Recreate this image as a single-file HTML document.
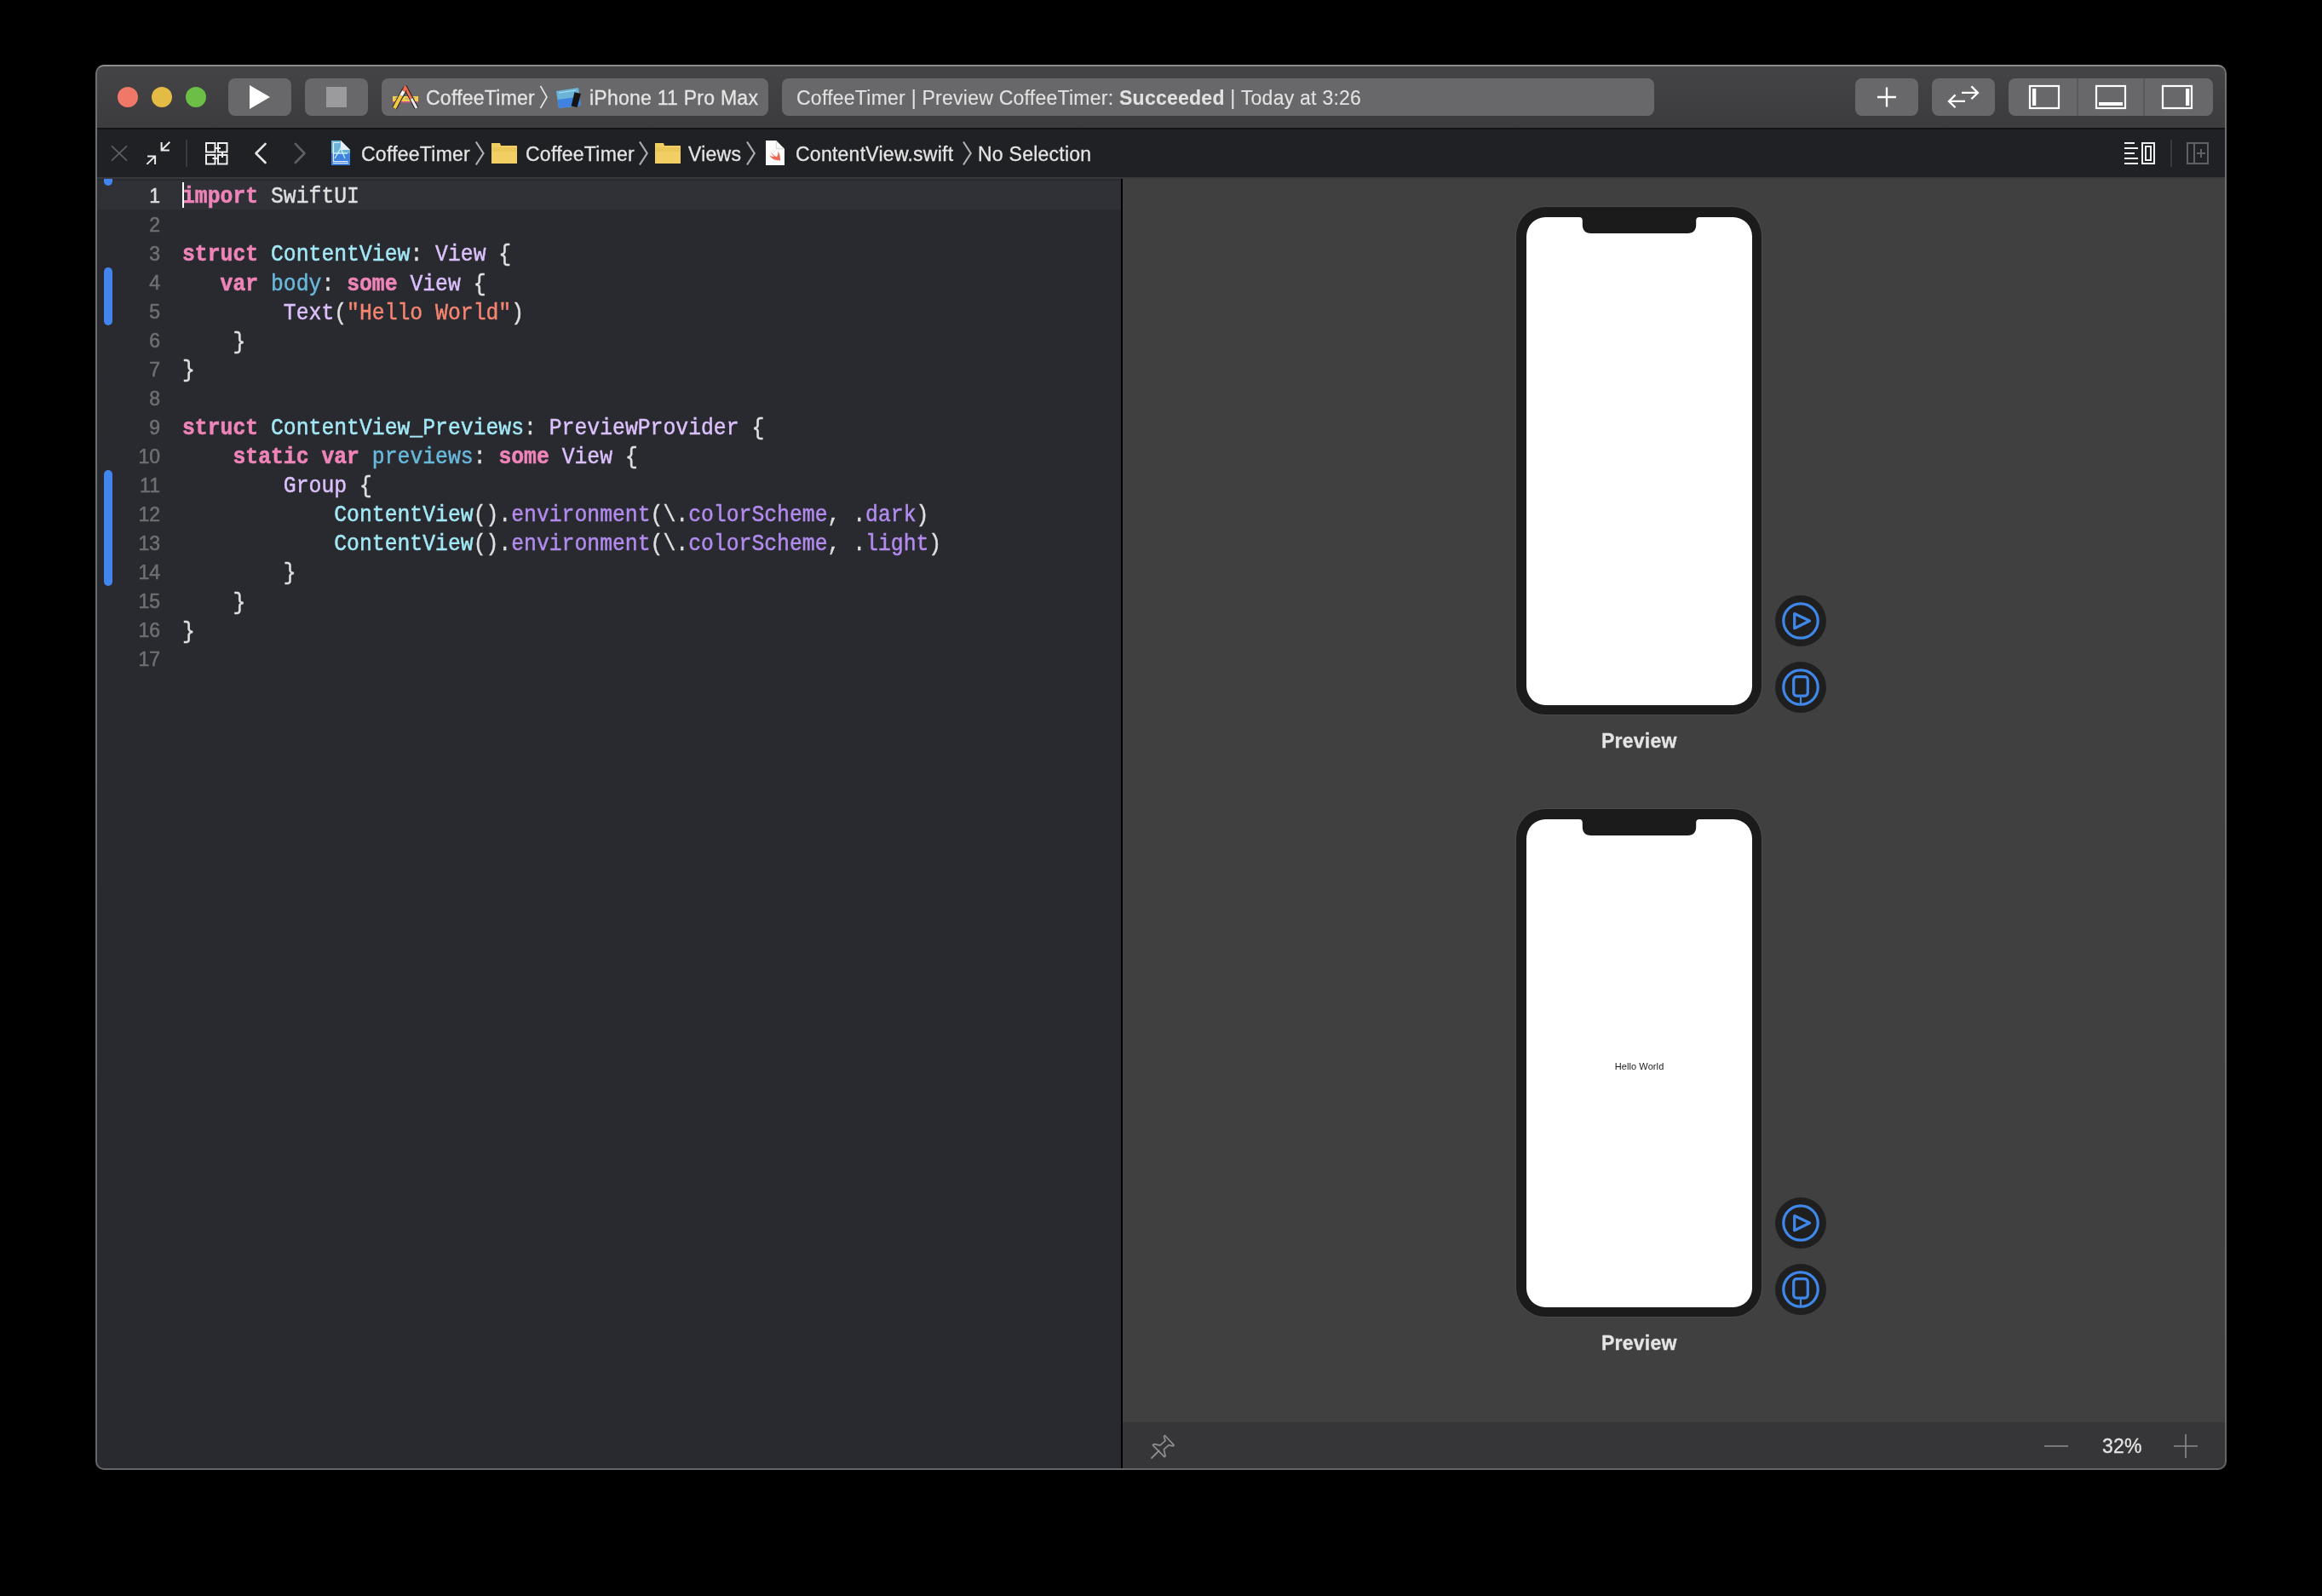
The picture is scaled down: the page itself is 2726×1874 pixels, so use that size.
<!DOCTYPE html>
<html><head><meta charset="utf-8">
<style>
*{margin:0;padding:0;box-sizing:border-box}
html,body{width:2726px;height:1874px;background:#000;overflow:hidden}
body{position:relative;font-family:"Liberation Sans",sans-serif}
.a{position:absolute}
#win{left:112px;top:76px;width:2502px;height:1650px;border-radius:10px;background:linear-gradient(#8e8e90 0px,#8e8e90 2px,#707073 4px,#646569 100%);overflow:hidden}
#tb{left:2px;top:2px;width:2498px;height:72px;background:linear-gradient(#444446,#3c3c3e);border-radius:8px 8px 0 0}
#tbline{left:2px;top:74px;width:2498px;height:2px;background:#141415}
#jb{left:2px;top:76px;width:2498px;height:56px;background:#202124}
#jbline{left:2px;top:132px;width:2498px;height:2px;background:#38393b}
#ed{left:2px;top:134px;width:1202px;height:1514px;background:#292a2f;border-radius:0 0 0 8px}
#div{left:1204px;top:134px;width:2px;height:1514px;background:#000}
#pv{left:1206px;top:134px;width:1294px;height:1460px;background:#404040}
#bb{left:1206px;top:1594px;width:1294px;height:54px;background:#363638;border-radius:0 0 8px 0}
.btn{background:#68686a;border-radius:8px}
.tl{width:24px;height:24px;border-radius:50%}
.ui{will-change:transform;-webkit-text-stroke:0.3px currentColor;color:#e4e4e4;font-size:23px;letter-spacing:0.25px;white-space:nowrap;line-height:26px}
.code{font-family:"Liberation Mono",monospace;font-size:24.75px;line-height:30.909px;white-space:pre;color:#dfdfe0;will-change:transform;transform:scaleY(1.1);transform-origin:0 0;-webkit-text-stroke:0.45px currentColor}
.ln{font-family:"Liberation Sans",sans-serif;font-size:23px;line-height:34px;letter-spacing:0px;color:#6e6f73;text-align:right;width:100px;will-change:transform;-webkit-text-stroke:0.55px currentColor}
.k{color:#ee84b8;font-weight:bold;-webkit-text-stroke:0.55px currentColor}
.td{color:#a3e8f6}
.od{color:#69b9dc}
.st{color:#dbc0fc}
.sf{color:#b28bee}
.s{color:#f58471}
</style></head><body>
<div id="win" class="a">
  <div id="tb" class="a"></div>
  <div id="tbline" class="a"></div>
  <div id="jb" class="a"></div>
  <div id="jbline" class="a"></div>
  <div id="ed" class="a"></div>
  <div id="div" class="a"></div>
  <div id="pv" class="a"></div>
  <div id="bb" class="a"></div>
</div>

<!-- traffic lights -->
<div class="a tl" style="left:138px;top:102px;background:#ef7868"></div>
<div class="a tl" style="left:178px;top:102px;background:#e3bb45"></div>
<div class="a tl" style="left:218px;top:102px;background:#6bbf46"></div>

<!-- toolbar buttons -->
<div class="a btn" style="left:268px;top:92px;width:74px;height:44px"></div>
<div class="a btn" style="left:358px;top:92px;width:74px;height:44px"></div>
<div class="a btn" style="left:448px;top:92px;width:454px;height:44px"></div>
<div class="a btn" style="left:918px;top:92px;width:1024px;height:44px"></div>
<div class="a btn" style="left:2178px;top:92px;width:74px;height:44px"></div>
<div class="a btn" style="left:2268px;top:92px;width:74px;height:44px"></div>
<div class="a btn" style="left:2358px;top:92px;width:240px;height:44px"></div>

<div class="a ui" style="left:500px;top:102px">CoffeeTimer</div>
<div class="a ui" style="left:692px;top:102px">iPhone 11 Pro Max</div>
<div class="a ui" style="left:935px;top:102px;-webkit-text-stroke:0.1px currentColor;color:#e2e2e2">CoffeeTimer | Preview CoffeeTimer: <b>Succeeded</b> | Today at 3:26</div>

<!-- jump bar text -->
<div class="a ui" style="left:424px;top:168px">CoffeeTimer</div>
<div class="a ui" style="left:617px;top:168px">CoffeeTimer</div>
<div class="a ui" style="left:808px;top:168px">Views</div>
<div class="a ui" style="left:934px;top:168px">ContentView.swift</div>
<div class="a ui" style="left:1148px;top:168px">No Selection</div>

<!-- editor -->
<div class="a" style="left:114px;top:212px;width:1202px;height:34px;background:#2f3137"></div>
<div class="a ln" style="left:88px;top:213px">
<div style="color:#dedede">1</div><div>2</div><div>3</div><div>4</div><div>5</div><div>6</div><div>7</div><div>8</div><div>9</div><div>10</div><div>11</div><div>12</div><div>13</div><div>14</div><div>15</div><div>16</div><div>17</div>
</div>
<div class="a code" style="left:214px;top:214px"><span class="k">import</span> SwiftUI

<span class="k">struct</span> <span class="td">ContentView</span>: <span class="st">View</span> {
   <span class="k">var</span> <span class="od">body</span>: <span class="k">some</span> <span class="st">View</span> {
        <span class="st">Text</span>(<span class="s">"Hello World"</span>)
    }
}

<span class="k">struct</span> <span class="td">ContentView_Previews</span>: <span class="st">PreviewProvider</span> {
    <span class="k">static</span> <span class="k">var</span> <span class="od">previews</span>: <span class="k">some</span> <span class="st">View</span> {
        <span class="st">Group</span> {
            <span class="td">ContentView</span>().<span class="sf">environment</span>(\.<span class="sf">colorScheme</span>, .<span class="sf">dark</span>)
            <span class="td">ContentView</span>().<span class="sf">environment</span>(\.<span class="sf">colorScheme</span>, .<span class="sf">light</span>)
        }
    }
}
</div>
<div class="a" style="left:214px;top:214px;width:2px;height:30px;background:#fff"></div>


<svg class="a" style="left:0;top:0" width="2726" height="1874" viewBox="0 0 2726 1874">
<!-- play / stop -->
<path d="M293 100 L317 114 L293 128 Z" fill="#fff"/>
<rect x="383" y="102" width="24" height="24" fill="#9b9b9d"/>
<!-- app icon -->
<g>
 <rect x="461" y="113" width="30" height="7" fill="#f2cd48"/>
 <rect x="461" y="119" width="30" height="1.5" fill="#d9568f"/>
 <path d="M464 115 h3 M470 115 h2 M476 116 h3 M484 115 h3" stroke="#8a8a9a" stroke-width="1.2"/>
 <path d="M475 101 L489 127" stroke="#222" stroke-width="5"/>
 <path d="M475 101 L483 116" stroke="#ee6b50" stroke-width="3"/>
 <path d="M483 116 L489 127" stroke="#e8e8e8" stroke-width="3"/>
 <path d="M463 127 L475 105" stroke="#222" stroke-width="6"/>
 <path d="M463 127 L471 112" stroke="#f2c93e" stroke-width="4"/>
 <path d="M471 112 L474 107" stroke="#f4f4f4" stroke-width="4"/>
 <path d="M474 107 L476 103.5" stroke="#ee6b50" stroke-width="4"/>
</g>
<!-- device icon -->
<path d="M653 107 L679 103 L682 124 L656 127 Z" fill="#6cb3d8"/>
<path d="M654.5 117 L680.5 113.5 L682 124 L656 127 Z" fill="#3f82e0"/>
<path d="M656 109 L676 106" stroke="#a8e6f5" stroke-width="1.2"/>
<path d="M674.5 108.3 L682 110 L677.6 126 L670.6 124.6 Z" fill="#151515"/>
<!-- scheme chevron -->
<path d="M634.5 101 L642 114 L634.5 127" stroke="#e6e6e6" stroke-width="1.6" fill="none"/>
<!-- toolbar right icons -->
<path d="M2204 114 H2226 M2215 102.5 V125.5" stroke="#fff" stroke-width="2.3"/>
<path d="M2303 108.9 H2322 M2314.4 101.4 L2322 108.9 L2314.4 116.3" stroke="#fff" stroke-width="2.3" fill="none"/>
<path d="M2307 118.9 H2288 M2295.6 111.4 L2288 118.9 L2295.6 126.3" stroke="#fff" stroke-width="2.3" fill="none"/>
<rect x="2438.5" y="92" width="1.2" height="44" fill="#505052"/>
<rect x="2516.5" y="92" width="1.2" height="44" fill="#505052"/>
<rect x="2383" y="101" width="34" height="26" stroke="#fff" stroke-width="2.2" fill="none"/>
<rect x="2386" y="104" width="4.3" height="20" fill="#fff"/>
<rect x="2461" y="101" width="34" height="26" stroke="#fff" stroke-width="2.2" fill="none"/>
<rect x="2464" y="120" width="28" height="4" fill="#fff"/>
<rect x="2539" y="101" width="34" height="26" stroke="#fff" stroke-width="2.2" fill="none"/>
<rect x="2566" y="104" width="4.3" height="20" fill="#fff"/>
<!-- jump bar left icons -->
<path d="M131 171.3 L149 188.7 M149 171.3 L131 188.7" stroke="#606166" stroke-width="1.6"/>
<path d="M199.3 166.8 L190 176 M189.6 167.1 V176.5 H198.9" stroke="#ececec" stroke-width="2" fill="none"/>
<path d="M172.4 192.9 L182 183.6 M173.1 183.6 H182.1 V192.9" stroke="#ececec" stroke-width="2" fill="none"/>
<rect x="218" y="164" width="2" height="32" fill="#3a3b3e"/>
<g stroke="#efefef" stroke-width="2" fill="none">
 <rect x="242" y="168" width="10.5" height="10.5"/>
 <rect x="256" y="168" width="10.5" height="10.5"/>
 <rect x="242" y="182" width="10.5" height="10.5"/>
 <rect x="256" y="182" width="10.5" height="10.5"/>
 <path d="M252.5 174 H259 M261 178.5 V185 M249.5 186 H256"/>
</g>
<path d="M311.6 168.9 L300.5 180 L311.6 191" stroke="#e6e6e6" stroke-width="2.6" stroke-linecap="round" stroke-linejoin="round" fill="none"/>
<path d="M346.8 168.9 L357.5 180 L346.8 191" stroke="#5e5f63" stroke-width="2.6" stroke-linecap="round" stroke-linejoin="round" fill="none"/>
<!-- project file icon -->
<path d="M389 165 H400 L411 176 V194 H389 Z" fill="#3f82e0"/>
<path d="M389 165 H400 L411 176 V180 H389 Z" fill="#6cb3d8"/>
<path d="M391.5 167.5 H399 M391.5 167.5 V189.5 H408.5" stroke="#e8f0f4" stroke-width="1.2" fill="none"/>
<path d="M391 191.5 H409" stroke="#e8f0f4" stroke-width="1.2"/>
<path d="M400 165 L411 176 H400 Z" fill="#e8eef2"/>
<path d="M393 186 L400 174 L405 186 M392 180 H408" stroke="#c9f0fb" stroke-width="1.3" fill="none"/>
<!-- jump chevrons -->
<path d="M558.8 166.5 L567.5 180 L558.8 193.5" stroke="#acadb1" stroke-width="2.2" fill="none"/>
<path d="M751 166.5 L759.7 180 L751 193.5" stroke="#acadb1" stroke-width="2.2" fill="none"/>
<path d="M877 166.5 L885.7 180 L877 193.5" stroke="#acadb1" stroke-width="2.2" fill="none"/>
<path d="M1131 166.5 L1139.7 180 L1131 193.5" stroke="#acadb1" stroke-width="2.2" fill="none"/>
<!-- folders -->
<path d="M577 168 H587 L588 171 H607 V192 H577 Z" fill="#f2cf63"/>
<path d="M769 168 H779 L780 171 H799 V192 H769 Z" fill="#f2cf63"/>
<rect x="578" y="173" width="28" height="5" fill="#e6c252" opacity="0.6"/>
<rect x="770" y="173" width="28" height="5" fill="#e6c252" opacity="0.6"/>
<!-- swift file -->
<path d="M899 165 H911.3 L921 174.8 V194 H899 Z" fill="#fdfdfd"/>
<path d="M911.3 165 V174.8 H921" stroke="#c8c8c8" stroke-width="0.8" fill="none"/>
<path d="M903 182 C906 187 911 189 914 188 L916 189 C916 185 916 181 913 177 C914 181 913 184 911 184 C908 182 906 180 904 178 C906 181 908 183 909 184 C907 184 904 183 903 182 Z" fill="#ec6a55"/>
<!-- jump right icons -->
<path d="M2494 168 H2506 M2494 174 H2510 M2494 180 H2506 M2494 186 H2510 M2494 192 H2510" stroke="#efefef" stroke-width="2"/>
<rect x="2515" y="168" width="14" height="24" stroke="#efefef" stroke-width="2" fill="none"/>
<rect x="2519" y="172" width="6" height="16" stroke="#efefef" stroke-width="2" fill="none"/>
<rect x="2548" y="164" width="2" height="32" fill="#3a3b3e"/>
<rect x="2568" y="168" width="24" height="24" stroke="#606166" stroke-width="2" fill="none"/>
<path d="M2576 168 V192 M2579 180 H2589 M2584 175 V185" stroke="#606166" stroke-width="2"/>
<!-- change bars -->
<path d="M122 210 H132 V213 A5 5 0 0 1 122 213 Z" fill="#4285ee"/>
<rect x="122" y="314" width="10" height="68" rx="5" fill="#4285ee"/>
<rect x="122" y="552" width="10" height="136" rx="5" fill="#4285ee"/>
</svg>

<!-- preview -->
<div class="a" style="left:1779px;top:242px;width:290px;height:598px;border-radius:35px;background:#4a4b4d"></div>
<div class="a" style="left:1780px;top:243px;width:288px;height:596px;border-radius:34px;background:#1b1b1b"></div>
<div class="a" style="left:1792px;top:255px;width:265px;height:573px;border-radius:22.5px;background:#fff;overflow:hidden">
  <svg class="a" style="left:0;top:0" width="265" height="40" viewBox="0 0 265 40"><path d="M62 0 C64.5 0 65.8 1.5 65.8 4 L65.8 9 C65.8 15 69 19 75.8 19 L189.2 19 C196 19 199.2 15 199.2 9 L199.2 4 C199.2 1.5 200.5 0 203 0 Z" fill="#1b1b1b"/></svg>
  
</div>
<div class="a" style="left:2084px;top:699px;width:60px;height:60px;border-radius:50%;background:#1f1f1f"></div>
<div class="a" style="left:2084px;top:777px;width:60px;height:60px;border-radius:50%;background:#1f1f1f"></div>
<svg class="a" style="left:2084px;top:699px" width="60" height="140" viewBox="0 0 60 140">
 <circle cx="30" cy="30" r="20.2" stroke="#3f88ea" stroke-width="3.2" fill="none"/>
 <path d="M22.7 21.5 L40.5 30 L22.7 38.7 Z" stroke="#3f88ea" stroke-width="3.2" stroke-linejoin="round" fill="none"/>
 <circle cx="30" cy="108" r="20.2" stroke="#3f88ea" stroke-width="3.2" fill="none"/>
 <rect x="21.7" y="95.7" width="16.6" height="22.4" rx="3.5" stroke="#3f88ea" stroke-width="3.2" fill="none"/>
 <path d="M30 119.5 V127" stroke="#3f88ea" stroke-width="2.2"/>
</svg>
<div class="a ui" style="left:1880px;top:857px;font-weight:bold;font-size:23px">Preview</div>

<div class="a" style="left:1779px;top:949px;width:290px;height:598px;border-radius:35px;background:#4a4b4d"></div>
<div class="a" style="left:1780px;top:950px;width:288px;height:596px;border-radius:34px;background:#1b1b1b"></div>
<div class="a" style="left:1792px;top:962px;width:265px;height:573px;border-radius:22.5px;background:#fff;overflow:hidden">
  <svg class="a" style="left:0;top:0" width="265" height="40" viewBox="0 0 265 40"><path d="M62 0 C64.5 0 65.8 1.5 65.8 4 L65.8 9 C65.8 15 69 19 75.8 19 L189.2 19 C196 19 199.2 15 199.2 9 L199.2 4 C199.2 1.5 200.5 0 203 0 Z" fill="#1b1b1b"/></svg>
  <div class="a" style="left:0;top:284px;width:265px;text-align:center;font-size:11px;line-height:12px;color:#1a1a1a;letter-spacing:0.1px">Hello World</div>
</div>
<div class="a" style="left:2084px;top:1406px;width:60px;height:60px;border-radius:50%;background:#1f1f1f"></div>
<div class="a" style="left:2084px;top:1484px;width:60px;height:60px;border-radius:50%;background:#1f1f1f"></div>
<svg class="a" style="left:2084px;top:1406px" width="60" height="140" viewBox="0 0 60 140">
 <circle cx="30" cy="30" r="20.2" stroke="#3f88ea" stroke-width="3.2" fill="none"/>
 <path d="M22.7 21.5 L40.5 30 L22.7 38.7 Z" stroke="#3f88ea" stroke-width="3.2" stroke-linejoin="round" fill="none"/>
 <circle cx="30" cy="108" r="20.2" stroke="#3f88ea" stroke-width="3.2" fill="none"/>
 <rect x="21.7" y="95.7" width="16.6" height="22.4" rx="3.5" stroke="#3f88ea" stroke-width="3.2" fill="none"/>
 <path d="M30 119.5 V127" stroke="#3f88ea" stroke-width="2.2"/>
</svg>
<div class="a ui" style="left:1880px;top:1564px;font-weight:bold;font-size:23px">Preview</div>

<div class="a ui" style="left:2468px;top:1685px">32%</div>
<svg class="a" style="left:0;top:1600px" width="2726" height="200" viewBox="0 1600 2726 200">
 <path d="M1353.4 1696.8 L1355.1 1695.7 L1361.9 1697.1 L1368.1 1691.7 L1366.4 1686.7 L1367.5 1685.5 L1378.2 1696.8 L1377.1 1697.9 L1372 1696.8 L1366.4 1701.9 L1368.1 1709.8 L1367 1710.6 Z" stroke="#8e8e91" stroke-width="1.7" stroke-linejoin="round" fill="none"/>
 <path d="M1352 1712 L1360.5 1703.5" stroke="#8e8e91" stroke-width="1.8" stroke-linecap="round"/>
 <path d="M2400 1698 H2428" stroke="#8a8a8d" stroke-width="1.6"/>
 <path d="M2552 1698 H2580 M2566 1684 V1712" stroke="#8a8a8d" stroke-width="1.6"/>
</svg>
</body></html>
